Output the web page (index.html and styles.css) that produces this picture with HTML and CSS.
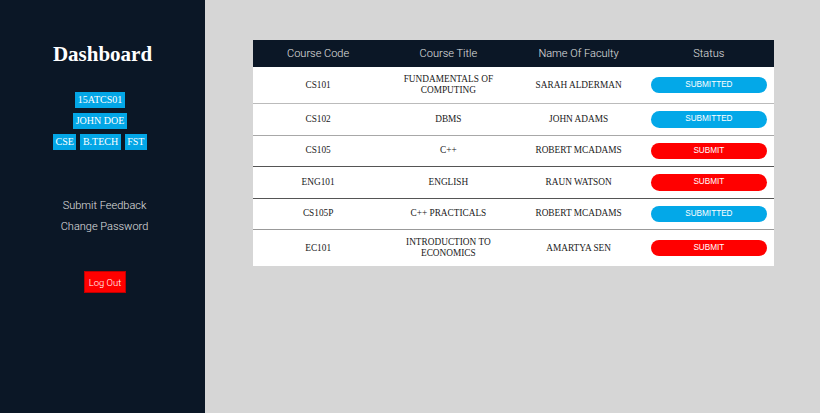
FILE: index.html
```html
<!DOCTYPE html>
<html>
<head>
<meta charset="utf-8">
<link rel="stylesheet" href="styles.css">
</head>
<body>
<div class="app">
  <aside class="sidebar">
    <h1 class="title">Dashboard</h1>
    <div class="badges">
      <div class="badge-row"><span class="badge">15ATCS01</span></div>
      <div class="badge-row"><span class="badge">JOHN DOE</span></div>
      <div class="badge-row"><span class="badge">CSE</span><span class="badge">B.TECH</span><span class="badge">FST</span></div>
    </div>
    <nav class="links">
      <a class="link">Submit Feedback</a>
      <a class="link">Change Password</a>
    </nav>
    <button class="logout">Log Out</button>
  </aside>
  <main class="main">
    <table class="courses">
      <thead>
        <tr><th>Course Code</th><th>Course Title</th><th>Name Of Faculty</th><th>Status</th></tr>
      </thead>
      <tbody>
        <tr><td>CS101</td><td>FUNDAMENTALS OF<br>COMPUTING</td><td>SARAH ALDERMAN</td><td><span class="status done">SUBMITTED</span></td></tr>
        <tr><td>CS102</td><td>DBMS</td><td>JOHN ADAMS</td><td><span class="status done">SUBMITTED</span></td></tr>
        <tr><td>CS105</td><td>C++</td><td>ROBERT MCADAMS</td><td><span class="status todo">SUBMIT</span></td></tr>
        <tr><td>ENG101</td><td>ENGLISH</td><td>RAUN WATSON</td><td><span class="status todo">SUBMIT</span></td></tr>
        <tr><td>CS105P</td><td>C++ PRACTICALS</td><td>ROBERT MCADAMS</td><td><span class="status done">SUBMITTED</span></td></tr>
        <tr><td>EC101</td><td>INTRODUCTION TO<br>ECONOMICS</td><td>AMARTYA SEN</td><td><span class="status todo">SUBMIT</span></td></tr>
      </tbody>
    </table>
  </main>
</div>
</body>
</html>
```
FILE: styles.css
```css
html, body {
  margin: 0;
  padding: 0;
  height: 100%;
}
body {
  background: #d6d6d6;
  font-family: "Liberation Serif", serif;
}
.app {
  display: flex;
  height: 413px;
}
.sidebar {
  width: 205px;
  flex: none;
  background: #0b1726;
  display: flex;
  flex-direction: column;
  align-items: center;
}
.title {
  margin: 41px 0 0;
  font-family: "Liberation Serif", serif;
  font-weight: bold;
  font-size: 21px;
  line-height: 26px;
  color: #fff;
}
.badges {
  margin-top: 25px;
  margin-right: 5px;
  display: flex;
  flex-direction: column;
  align-items: center;
  gap: 5px;
}
.badge-row {
  display: flex;
  gap: 4px;
}
.badge {
  background: #03a6e6;
  color: #fff;
  font-size: 10px;
  line-height: 16px;
  height: 16px;
  padding: 0 2.5px;
}
.links {
  margin-top: 49px;
  margin-left: 4px;
  display: flex;
  flex-direction: column;
  align-items: center;
  gap: 8px;
}
.link {
  font-family: Roboto, sans-serif;
  font-size: 11px;
  line-height: 13px;
  color: #e0e0e0;
  font-weight: 300;
}
.logout {
  margin-top: 38px;
  margin-left: 5px;
  background: #ff0000;
  border: 1px solid #c00000;
  color: #fff;
  font-family: Roboto, sans-serif;
  font-size: 9.5px;
  height: 22px;
  padding: 0 4px;
  font-weight: 300;
}
.main {
  flex: 1;
  padding: 40px 0 0 48px;
}
.courses {
  width: 521px;
  border-collapse: collapse;
  table-layout: fixed;
  background: #fff;
}
.courses th {
  background: #0b1726;
  color: #e2e2e2;
  font-family: Roboto, sans-serif;
  font-weight: 300;
  font-size: 11px;
  height: 27px;
  padding: 0;
  text-align: center;
}
.courses td {
  padding: 7px 7px;
  text-align: center;
  font-size: 9.3px;
  line-height: 11px;
  color: #1a1a1a;
  border-bottom: 1px solid #bbb;
}
.courses tbody tr:nth-child(2) td { border-bottom-color: #a8a8a8; }
.courses tbody tr:nth-child(3) td,
.courses tbody tr:nth-child(4) td { border-bottom-color: #555; }
.courses tbody tr:nth-child(5) td { border-bottom-color: #999; }
.courses tbody tr:last-child td { border-bottom: none; }
.status {
  display: block;
  height: 16.5px;
  line-height: 16.5px;
  border-radius: 9px;
  color: #fff;
  font-family: "Liberation Sans", Arial, sans-serif;
  font-size: 8.2px;
}
.status.done { background: #03a8e8; }
.status.todo { background: #ff0000; }
```
